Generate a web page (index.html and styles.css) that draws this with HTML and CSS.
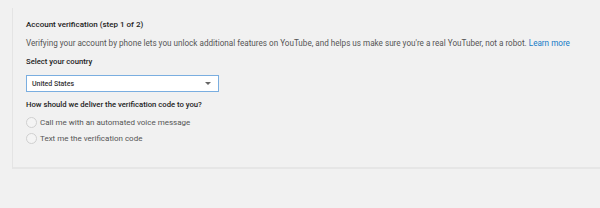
FILE: index.html
```html
<!DOCTYPE html>
<html lang="en">
<head>
  <meta charset="UTF-8" />
  <title>Account verification</title>
  <link rel="stylesheet" href="styles.css">
</head>
<body>
  <div class="panel">
    <div class="titre">Account verification (step 1 of 2)</div>
    <p class="intro">Verifying your account by phone lets you unlock additional features on YouTube, and helps us make sure you're a real YouTuber, not a robot. <a href="#">Learn more</a></p>

    <div class="label">Select your country</div>
    <div class="select">
      <span>United States</span>
      <span class="arrow"></span>
    </div>

    <div class="label question">How should we deliver the verification code to you?</div>
    <label class="option"><span class="radio"></span>Call me with an automated voice message</label>
    <label class="option"><span class="radio"></span>Text me the verification code</label>
  </div>
</body>
</html>
```

FILE: styles.css
```css
body {
  margin: 0;
  background: #f1f1f1;
  font-family: Roboto, "Liberation Sans", sans-serif;
  font-size: 8px;
  color: #333;
}

/* Bloc principal avec bord à gauche et en bas */
.panel {
  margin: 8px 0 0 12px;
  padding: 10px 13px 21px;
  border-left: 1px solid #e4e4e4;
  border-bottom: 2px solid #e6e6e6;
}

.titre {
  font-size: 8px;
  font-weight: 500;
  color: #222;
  line-height: 14px;
}

.intro {
  margin: 4px 0 0;
  font-size: 8.15px;
  line-height: 14px;
  color: #555;
  white-space: nowrap;
}

.intro a {
  color: #167ac6;
  text-decoration: none;
}

.label {
  margin-top: 5px;
  font-size: 7.7px;
  font-weight: 500;
  color: #222;
  line-height: 14px;
}

/* Liste déroulante du pays */
.select {
  margin-top: 6px;
  width: 186px;
  height: 15px;
  border: 1px solid #7aaee0;
  background: #fff;
  display: flex;
  align-items: center;
  justify-content: space-between;
  padding: 0 0 0 5px;
  font-size: 7px;
  font-weight: 500;
  color: #333;
}

.arrow {
  width: 0;
  height: 0;
  border-left: 3px solid transparent;
  border-right: 3px solid transparent;
  border-top: 3px solid #666;
  margin-right: 7px;
}

.question {
  margin-top: 6px;
}

/* Boutons radio */
.option {
  display: flex;
  align-items: center;
  height: 15.5px;
  color: #555;
}

.option:first-of-type {
  margin-top: 3px;
}

.radio {
  width: 9px;
  height: 9px;
  border: 1px solid #d0d0d0;
  border-radius: 50%;
  background: #f4f4f4;
  margin-right: 3px;
}
```
